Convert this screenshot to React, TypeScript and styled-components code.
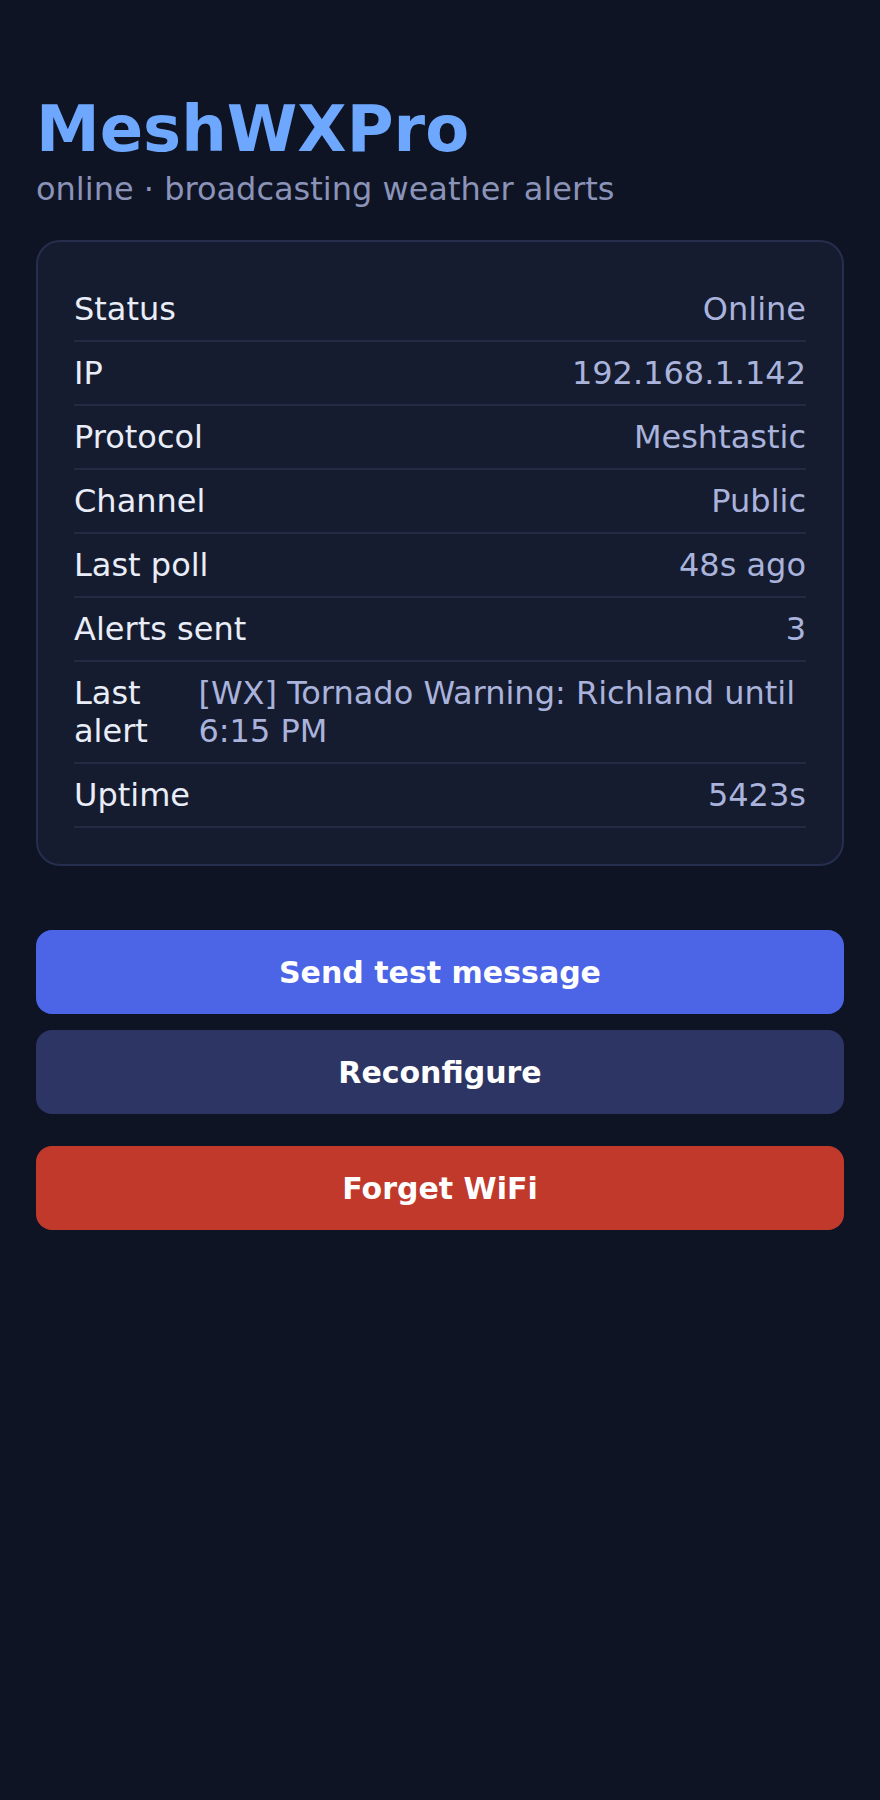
import React from "react";
import styled, { createGlobalStyle } from "styled-components";

const GlobalStyle = createGlobalStyle`
  html, body {
    margin: 0;
    padding: 0;
    background: #0e1424;
  }
  body {
    font-family: "DejaVu Sans", "Noto Sans", sans-serif;
    -webkit-font-smoothing: antialiased;
  }
`;

const Page = styled.main`
  min-height: 1800px;
  box-sizing: border-box;
  padding: 91px 36px 36px;
  background: #0e1424;
`;

const Title = styled.h1`
  margin: 0;
  font-size: 64px;
  line-height: 1.2;
  font-weight: 700;
  color: #6ea8fe;
`;

const Subtitle = styled.p`
  margin: 2px 0 0;
  font-size: 32px;
  line-height: 1.2;
  color: #8b93b8;
`;

const Card = styled.section`
  margin-top: 32px;
  background: #161c2f;
  border: 2px solid #262e4d;
  border-radius: 24px;
  padding: 36px;
`;

const Row = styled.div`
  display: flex;
  justify-content: space-between;
  align-items: flex-start;
  padding: 12px 0;
  border-bottom: 2px solid #232a44;
  font-size: 32px;
  line-height: 38px;
`;

const Label = styled.span`
  color: #e9edf8;
`;

const Value = styled.span`
  color: #a9b3dc;
  text-align: left;
`;

const Actions = styled.div`
  display: flex;
  flex-direction: column;
  gap: 16px;
  margin-top: 64px;
`;

const Button = styled.button<{ $variant: "primary" | "secondary" | "danger" }>`
  display: flex;
  align-items: center;
  justify-content: center;
  width: 100%;
  height: 84px;
  border: none;
  border-radius: 16px;
  font-family: "DejaVu Sans", sans-serif;
  font-size: 30px;
  font-weight: 700;
  color: #ffffff;
  cursor: pointer;
  background: ${(p) =>
    p.$variant === "primary"
      ? "#4b65e6"
      : p.$variant === "secondary"
      ? "#2c3563"
      : "#c0392b"};
  margin-top: ${(p) => (p.$variant === "danger" ? "16px" : "0")};
`;

const rows: [string, string][] = [
  ["Status", "Online"],
  ["IP", "192.168.1.142"],
  ["Protocol", "Meshtastic"],
  ["Channel", "Public"],
  ["Last poll", "48s ago"],
  ["Alerts sent", "3"],
  ["Last alert", "[WX] Tornado Warning: Richland until 6:15 PM"],
  ["Uptime", "5423s"],
];

export default function App() {
  return (
    <>
      <GlobalStyle />
      <Page>
        <Title>MeshWXPro</Title>
        <Subtitle>online · broadcasting weather alerts</Subtitle>
        <Card>
          {rows.map(([k, v]) => (
            <Row key={k}>
              <Label>{k}</Label>
              <Value>{v}</Value>
            </Row>
          ))}
        </Card>
        <Actions>
          <Button $variant="primary">Send test message</Button>
          <Button $variant="secondary">Reconfigure</Button>
          <Button $variant="danger">Forget WiFi</Button>
        </Actions>
      </Page>
    </>
  );
}
